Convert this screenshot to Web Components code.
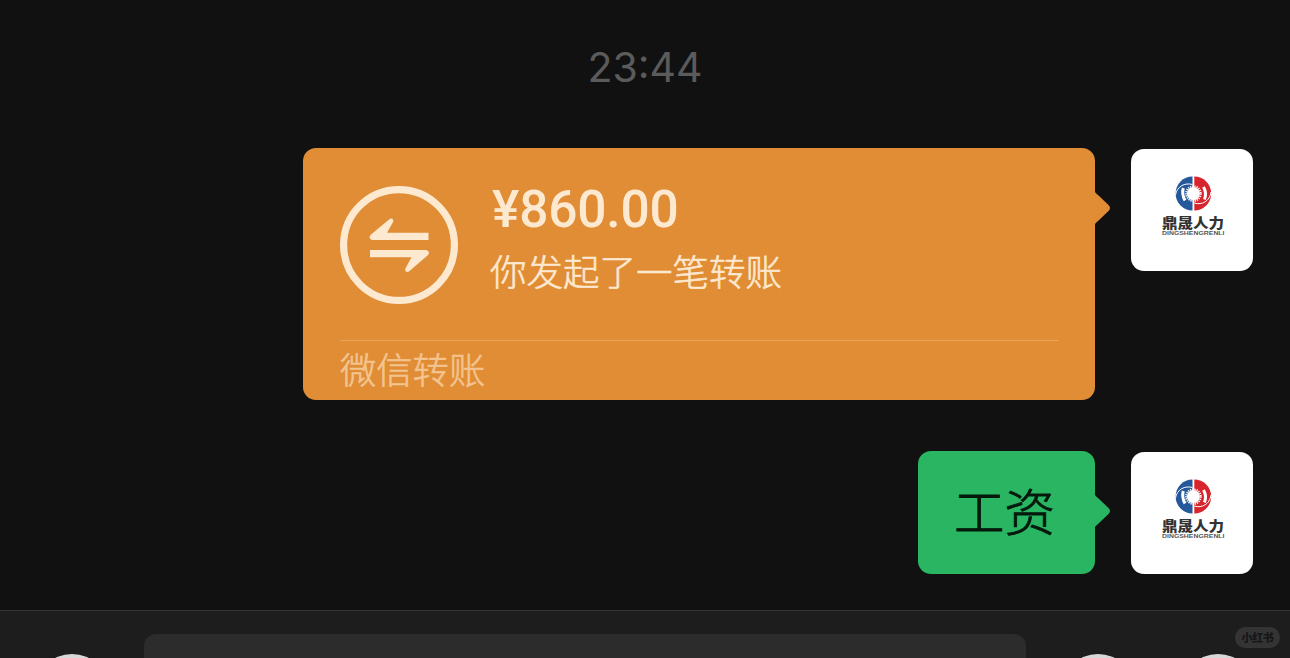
<!DOCTYPE html>
<html lang="zh-CN">
<head>
<meta charset="utf-8">
<title>Chat</title>
<style>
    html, body {
        margin: 0;
        height: 100%;
        overflow: hidden;
        background: #111;
    }
</style>
</head>
<body>
<chat-screen>
    <chat-time>23:44</chat-time>
    <chat-message color="orange">
        <transfer-card>
            <span slot="amount">¥860.00</span>
            <span slot="note">你发起了一笔转账</span>
            <span slot="source">微信转账</span>
        </transfer-card>
    </chat-message>
    <chat-message color="green"><chat-text>工资</chat-text></chat-message>
    <chat-toolbar slot="footer"><water-mark>小红书</water-mark></chat-toolbar>
</chat-screen>

<script>
function createTemplate(html) {
    const template = document.createElement('template');
    template.innerHTML = html;
    return template;
}

class BaseComponent extends HTMLElement {
    constructor() {
        super();
        this.attachShadow({ mode: 'open' });
        this.shadowRoot.appendChild(this.constructor.template.content.cloneNode(true));
    }
}

class ChatScreen extends BaseComponent {
    static template = createTemplate(`
        <style>
            :host {
                display: flex;
                flex-direction: column;
                height: 658px;
                overflow: hidden;
                background: #111;
                font-family: Inter, "Noto Sans CJK SC", sans-serif;
            }

            main {
                flex: 1;
                min-height: 0;
                display: flex;
                flex-direction: column;
                gap: 51px;
                padding: 42px 37px 0 0;
            }
        </style>
        <main><slot></slot></main>
        <slot name="footer"></slot>
    `);
}

class ChatTime extends BaseComponent {
    static template = createTemplate(`
        <style>
            :host {
                display: block;
                height: 50px;
                line-height: 50px;
                margin: 0 -37px 5px 0;
                text-align: center;
                font-size: 41px;
                color: #5b5b5b;
            }
        </style>
        <slot></slot>
    `);
}

class ChatMessage extends BaseComponent {
    static template = createTemplate(`
        <style>
            :host {
                --bubble: #e08d35;
                display: flex;
                justify-content: flex-end;
                align-items: flex-start;
                gap: 36px;
            }

            :host([color=green]) { --bubble: #29b561; }

            .bubble {
                position: relative;
                border-radius: 13px;
                background: var(--bubble);
            }

            .tail {
                position: absolute;
                left: 100%;
                top: 42px;
                margin-left: -1px;
                fill: var(--bubble);
            }
        </style>
        <div class="bubble">
            <slot></slot>
            <svg class="tail" width="17" height="36" viewBox="0 0 17 36">
                <path d="M0 0Q1 3 4 5L14.500 15Q17.500 18 14.500 21L4 31Q1 33 0 36Z"/>
            </svg>
        </div>
        <chat-avatar></chat-avatar>
    `);
}

class ChatAvatar extends BaseComponent {
    static template = createTemplate(`
        <style>
            :host {
                display: block;
                width: 122px;
                height: 122px;
                margin-top: 1px;
                border-radius: 13px;
                background: #fff;
            }

            svg { display: block; }
        </style>
        <svg width="122" height="122" viewBox="0 0 122 122">
            <path fill="#24589a" d="M61.500 27.500A16.900 17 0 0 0 61.500 61.500Z"/>
            <path fill="#d8242d" d="M63.300 27.500A16.900 17 0 0 1 63.300 61.500Z"/>
            <g fill="none" stroke="#fff">
                <path stroke-width="1" d="M44.500 46C46 37 54 33.500 61.500 35.500M80 43C79 52 71 56.500 63.300 54"/>
                <path stroke-width="3" d="M52.300 39Q50.500 45 54 51.500M72.500 38Q76 44 73.500 50.500"/>
                <circle cx="62.400" cy="44.600" r="7.300" stroke-width="2" stroke-dasharray="1.200 1"/>
            </g>
            <circle cx="62.400" cy="44.600" r="6.500" fill="#fff"/>
            <text x="31" y="78.500" font-family="'Noto Sans CJK SC', sans-serif" font-size="13.500" font-weight="900" fill="#333" textLength="62" lengthAdjust="spacingAndGlyphs">鼎晟人力</text>
            <text x="31" y="85.500" font-family="'Liberation Sans', sans-serif" font-size="6" font-weight="700" fill="#555" textLength="62.500" lengthAdjust="spacingAndGlyphs">DINGSHENGRENLI</text>
        </svg>
    `);
}

class TransferCard extends BaseComponent {
    static template = createTemplate(`
        <style>
            :host {
                display: flex;
                flex-direction: column;
                box-sizing: border-box;
                width: 792px;
                height: 252px;
                padding: 0 36px 0 37px;
                color: #fde8d0;
            }

            .top {
                display: flex;
                gap: 32px;
                height: 192px;
            }

            .icon {
                flex: none;
                margin-top: 38px;
            }

            .info { padding-top: 34px; }

            .amount {
                height: 56px;
                padding-left: 2px;
                font: 500 51.500px/56px Roboto, sans-serif;
                letter-spacing: -0.2px;
            }

            .note {
                height: 52px;
                margin-top: 7px;
                font: 300 36.500px/52px "Noto Sans CJK SC", sans-serif;
                -webkit-text-stroke: 0.6px;
            }

            .source {
                border-top: 1px solid #e9a55f;
                font: 300 36.300px/55px "Noto Sans CJK SC", sans-serif;
                -webkit-text-stroke: 0.6px;
                color: #f3c490;
            }
        </style>
        <div class="top">
            <svg class="icon" width="118" height="118" viewBox="0 0 118 118">
                <circle cx="59" cy="59" r="55.400" fill="none" stroke="#fde8d0" stroke-width="7.200"/>
                <path fill="#fde8d0" d="M88.500 46.800V54H32Q27.500 52 31 48.500L49 33.500Q51.500 31.500 53 33.500Q53.800 34.700 52.800 36.500L47 46.800Z"/>
                <path fill="#fde8d0" d="M30 71.300V64.100H86.500Q91 66 87.500 69.600L69.500 85Q67 87 65.500 85Q64.700 83.800 65.700 82L71.500 71.300Z"/>
            </svg>
            <div class="info">
                <div class="amount"><slot name="amount"></slot></div>
                <div class="note"><slot name="note"></slot></div>
            </div>
        </div>
        <div class="source"><slot name="source"></slot></div>
    `);
}

class ChatText extends BaseComponent {
    static template = createTemplate(`
        <style>
            :host {
                display: block;
                box-sizing: border-box;
                width: 177px;
                height: 123px;
                padding-left: 36px;
                font: 300 50.500px/117px "Noto Sans CJK SC", sans-serif;
                -webkit-text-stroke: 0.9px;
                color: #04190c;
            }
        </style>
        <slot></slot>
    `);
}

class ChatToolbar extends BaseComponent {
    static template = createTemplate(`
        <style>
            :host {
                position: relative;
                display: flex;
                align-items: flex-start;
                box-sizing: border-box;
                height: 48px;
                padding: 23px 35px 0 35px;
                border-top: 1px solid #343434;
                background: #1d1d1d;
                overflow: hidden;
            }

            .input {
                width: 882px;
                height: 80px;
                margin: 0 35px 0 35px;
                border-radius: 12px;
                background: #2c2c2c;
            }

            .button {
                flex: none;
                width: 74px;
                height: 74px;
                margin-top: 20px;
                border-radius: 50%;
                background: #d8d8d8;
            }

            .button + .button { margin-left: 46px; }

            /* sits over the toolbar buttons */
            ::slotted(water-mark) {
                position: absolute;
                right: 10px;
                top: 16px;
            }
        </style>
        <div class="button"></div>
        <div class="input"></div>
        <div class="button"></div>
        <div class="button"></div>
        <slot></slot>
    `);
}

class WaterMark extends BaseComponent {
    static template = createTemplate(`
        <style>
            :host {
                display: block;
                width: 45px;
                height: 21px;
                border-radius: 11px;
                background: #343434;
                color: #161616;
                text-align: center;
                font: 900 11px/20px "Noto Sans CJK SC", sans-serif;
                letter-spacing: -0.4px;
            }
        </style>
        <slot></slot>
    `);
}

window.customElements.define('chat-screen', ChatScreen);
window.customElements.define('chat-time', ChatTime);
window.customElements.define('chat-avatar', ChatAvatar);
window.customElements.define('chat-message', ChatMessage);
window.customElements.define('transfer-card', TransferCard);
window.customElements.define('chat-text', ChatText);
window.customElements.define('chat-toolbar', ChatToolbar);
window.customElements.define('water-mark', WaterMark);
</script>
</body>
</html>
